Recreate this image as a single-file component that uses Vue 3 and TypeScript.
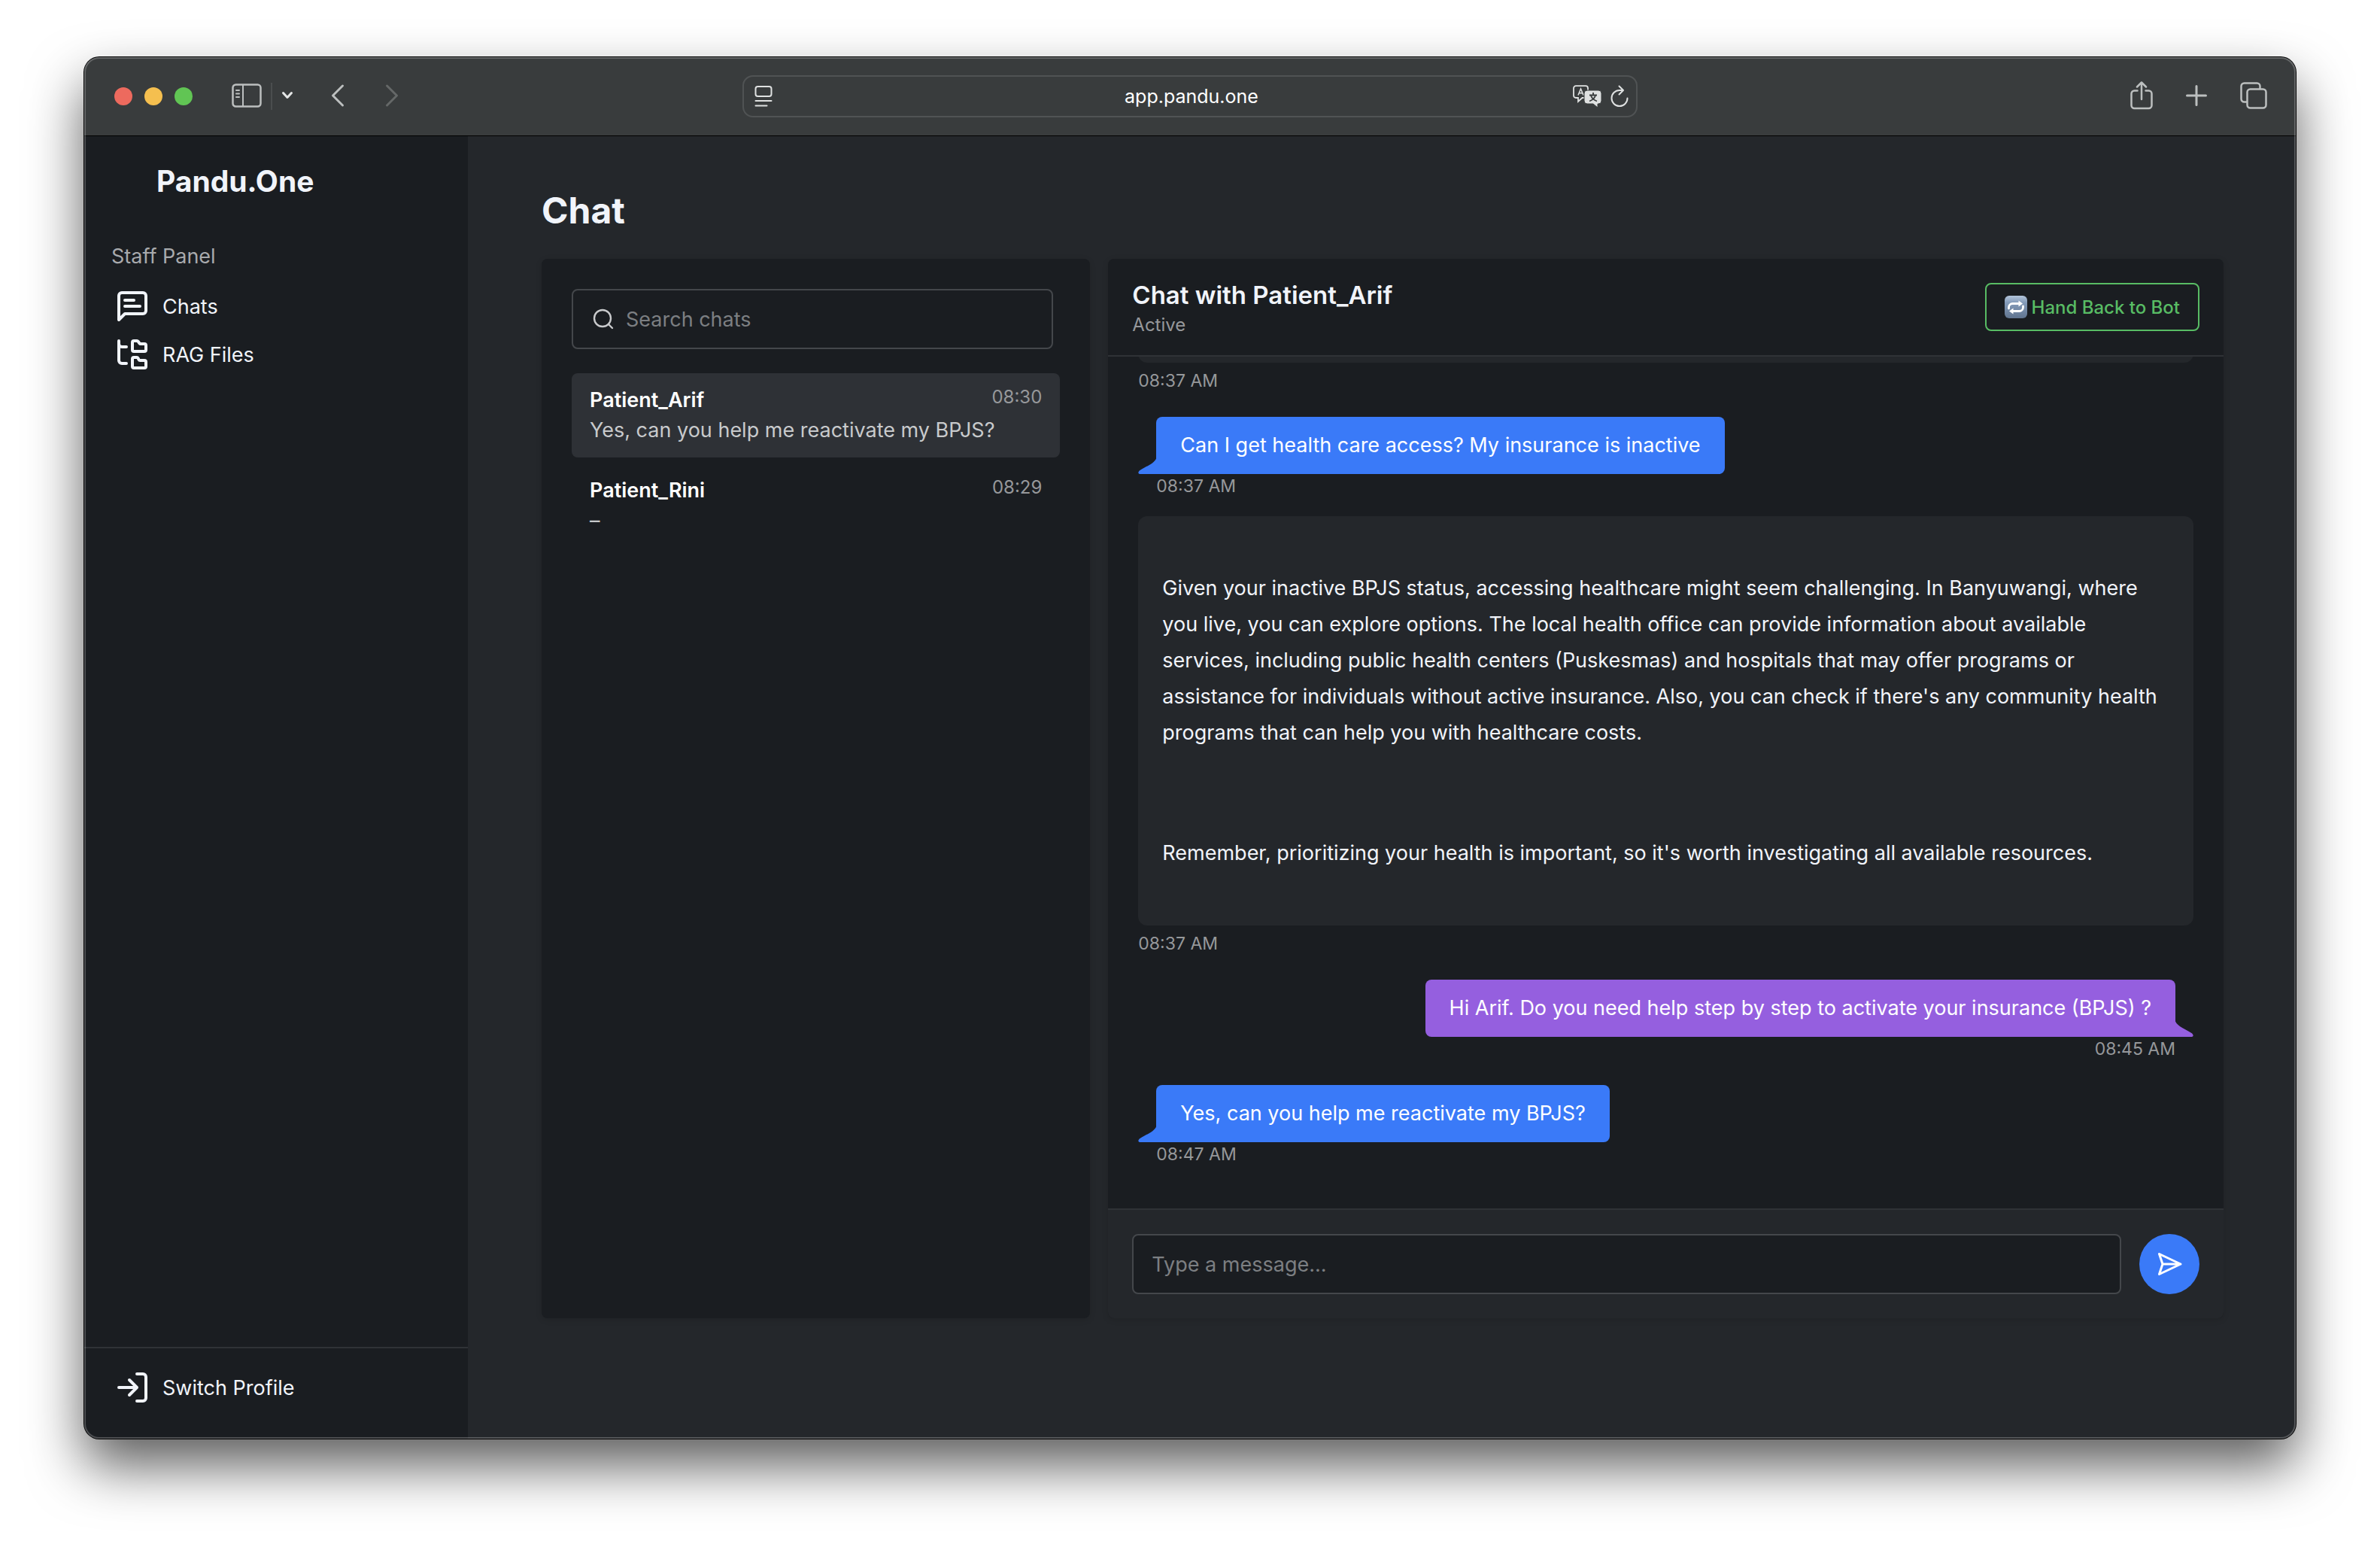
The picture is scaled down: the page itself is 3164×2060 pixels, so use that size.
<script setup lang="ts">
import { ref } from 'vue'

interface Conversation {
  name: string
  time: string
  preview: string
}

interface Message {
  from: 'bot' | 'patient' | 'staff'
  time: string
  paragraphs: string[]
}

const conversations: Conversation[] = [
  { name: 'Patient_Arif', time: '08:30', preview: 'Yes, can you help me reactivate my BPJS?' },
  { name: 'Patient_Rini', time: '08:29', preview: '–' },
]

const messages: Message[] = [
  { from: 'bot', time: '08:37 AM', paragraphs: [] },
  { from: 'patient', time: '08:37 AM', paragraphs: ['Can I get health care access? My insurance is inactive'] },
  {
    from: 'bot',
    time: '08:37 AM',
    paragraphs: [
      "Given your inactive BPJS status, accessing healthcare might seem challenging. In Banyuwangi, where you live, you can explore options. The local health office can provide information about available services, including public health centers (Puskesmas) and hospitals that may offer programs or assistance for individuals without active insurance. Also, you can check if there's any community health programs that can help you with healthcare costs.",
      "Remember, prioritizing your health is important, so it's worth investigating all available resources.",
    ],
  },
  { from: 'staff', time: '08:45 AM', paragraphs: ['Hi Arif. Do you need help step by step to activate your insurance (BPJS) ?'] },
  { from: 'patient', time: '08:47 AM', paragraphs: ['Yes, can you help me reactivate my BPJS?'] },
]

const activeName = ref('Patient_Arif')
const search = ref('')
const draft = ref('')
</script>

<template>
  <div class="desktop">
    <div class="window">
      <header class="toolbar">
        <div class="toolbar-left">
          <div class="lights">
            <span class="light red"></span>
            <span class="light yellow"></span>
            <span class="light green"></span>
          </div>
          <button class="icon-button" type="button" aria-label="Toggle sidebar">
            <svg width="40" height="32" viewBox="0 0 40 32" fill="none" stroke="#bcbfbf" stroke-width="2.5" stroke-linecap="round">
              <rect x="1.5" y="1.5" width="37" height="29" rx="4" />
              <path d="M15 2v28" stroke-width="2" />
              <path d="M6 9h4M6 13.500h4M6 18h4" stroke-width="2" />
            </svg>
          </button>
          <span class="toolbar-divider"></span>
          <button class="icon-button" type="button" aria-label="Tab groups">
            <svg width="16" height="12" viewBox="0 0 16 12" fill="none" stroke="#e4e6e6" stroke-width="3" stroke-linecap="round" stroke-linejoin="round">
              <path d="M2.500 2.500 8 8.500l5.500-6" />
            </svg>
          </button>
          <button class="icon-button back" type="button" aria-label="Back">
            <svg width="18" height="32" viewBox="0 0 18 32" fill="none" stroke="#bcbfbf" stroke-width="3" stroke-linecap="round" stroke-linejoin="round">
              <path d="M15.500 3 2.500 16l13 13" />
            </svg>
          </button>
          <button class="icon-button forward" type="button" aria-label="Forward">
            <svg width="18" height="32" viewBox="0 0 18 32" fill="none" stroke="#656868" stroke-width="3" stroke-linecap="round" stroke-linejoin="round">
              <path d="m2.500 3 13 13-13 13" />
            </svg>
          </button>
        </div>

        <div class="address">
          <svg width="24" height="30" viewBox="0 0 24 30" fill="none" stroke="#dfe1e1" stroke-width="2" stroke-linecap="round">
            <rect x="1.500" y="2" width="21" height="13" rx="3" />
            <path d="M1.500 21h21M1.500 27.500h15" />
          </svg>
          <span class="address-text">app.pandu.one</span>
          <div class="address-tools">
            <svg width="38" height="30" viewBox="0 0 38 30" fill="none">
              <path d="M4 1.200h13a3 3 0 0 1 3 3V14a3 3 0 0 1-3 3h-4.500L7 22v-5H4a3 3 0 0 1-3-3V4.200a3 3 0 0 1 3-3z" stroke="#dfe1e1" stroke-width="1.800" />
              <path d="M7 13.500 10.500 5 14 13.500M8.200 10.800h4.600" stroke="#dfe1e1" stroke-width="1.600" />
              <path d="M19 7h15a4 4 0 0 1 4 4v10a4 4 0 0 1-4 4h-1v5l-6-5h-8a4 4 0 0 1-4-4V11a4 4 0 0 1 4-4z" fill="#dfe1e1" stroke="#393c3d" stroke-width="1" />
              <path d="M27 10v3M22 13.500h10M30 14c-1 3-4 6-8 7.500M24 14c1 3 4 6 8 7.500" stroke="#393c3d" stroke-width="1.800" />
            </svg>
            <svg width="24" height="30" viewBox="0 0 24 30" fill="none" stroke="#dfe1e1" stroke-width="2" stroke-linecap="round" stroke-linejoin="round">
              <path d="M22.500 17.500A10.500 10.500 0 1 1 12 7h4" />
              <path d="m11.500 1.500 5.500 5.500-5.500 5.500" />
            </svg>
          </div>
        </div>

        <div class="toolbar-right">
          <button class="icon-button" type="button" aria-label="Share">
            <svg width="30" height="38" viewBox="0 0 30 38" fill="none" stroke="#bcbfbf" stroke-width="2.500" stroke-linecap="round" stroke-linejoin="round">
              <path d="M9.500 12.500H5.500a4 4 0 0 0-4 4v15.500a4 4 0 0 0 4 4h19a4 4 0 0 0 4-4V16.500a4 4 0 0 0-4-4h-4" />
              <path d="M15 24V2M9 7.500 15 1.500l6 6" />
            </svg>
          </button>
          <button class="icon-button" type="button" aria-label="New tab">
            <svg width="28" height="28" viewBox="0 0 28 28" fill="none" stroke="#bcbfbf" stroke-width="3" stroke-linecap="round">
              <path d="M14 1.500v25M1.500 14h25" />
            </svg>
          </button>
          <button class="icon-button" type="button" aria-label="Tab overview">
            <svg width="36" height="36" viewBox="0 0 36 36" fill="none" stroke="#bcbfbf" stroke-width="2.500">
              <rect x="9.500" y="9.500" width="25" height="25" rx="4" />
              <path d="M9.500 26.500H5.500a4 4 0 0 1-4-4v-17a4 4 0 0 1 4-4h17a4 4 0 0 1 4 4v4" />
            </svg>
          </button>
        </div>
      </header>

      <div class="app">
        <aside class="sidebar">
          <div class="brand">Pandu.One</div>
          <div class="group-label">Staff Panel</div>
          <nav class="nav">
            <a class="nav-link" href="#chats">
              <svg class="nav-icon" viewBox="0 0 24 24">
                <path d="M21 15a2 2 0 0 1-2 2H7l-4 4V5a2 2 0 0 1 2-2h14a2 2 0 0 1 2 2zM13 8H7M17 12H7" />
              </svg>
              Chats
            </a>
            <a class="nav-link" href="#rag-files">
              <svg class="nav-icon" viewBox="0 0 24 24">
                <path d="M20 10a1 1 0 0 0 1-1V6a1 1 0 0 0-1-1h-2.500a1 1 0 0 1-.8-.4l-.9-1.200A1 1 0 0 0 15 3h-2a1 1 0 0 0-1 1v5a1 1 0 0 0 1 1Z" />
                <path d="M20 21a1 1 0 0 0 1-1v-3a1 1 0 0 0-1-1h-2.900a1 1 0 0 1-.88-.55l-.42-.85a1 1 0 0 0-.92-.6H13a1 1 0 0 0-1 1v5a1 1 0 0 0 1 1Z" />
                <path d="M3 5a2 2 0 0 0 2 2h3M3 3v13a2 2 0 0 0 2 2h3" />
              </svg>
              RAG Files
            </a>
          </nav>
          <div class="sidebar-footer">
            <a class="nav-link" href="#switch-profile">
              <svg class="nav-icon" viewBox="0 0 24 24">
                <path d="M15 3h4a2 2 0 0 1 2 2v14a2 2 0 0 1-2 2h-4M10 17l5-5-5-5M15 12H3" />
              </svg>
              Switch Profile
            </a>
          </div>
        </aside>

        <main class="main">
          <h1 class="page-title">Chat</h1>
          <div class="columns">
            <section class="panel list-panel">
              <label class="search">
                <svg width="28" height="28" viewBox="0 0 28 28" fill="none" stroke="#c9cacc" stroke-width="2.400" stroke-linecap="round">
                  <circle cx="13" cy="13" r="11" />
                  <path d="m21 21 5 5" />
                </svg>
                <input v-model="search" type="text" placeholder="Search chats" aria-label="Search chats" />
              </label>
              <div class="conversations">
                <button
                  v-for="chat in conversations"
                  :key="chat.name"
                  type="button"
                  class="conversation"
                  :class="{ active: chat.name === activeName }"
                  @click="activeName = chat.name"
                >
                  <span class="conversation-head">
                    <span class="conversation-name">{{ chat.name }}</span>
                    <span class="conversation-time">{{ chat.time }}</span>
                  </span>
                  <span class="conversation-preview">{{ chat.preview }}</span>
                </button>
              </div>
            </section>

            <section class="panel chat-panel">
              <header class="chat-header">
                <div>
                  <h2 class="chat-title">Chat with Patient_Arif</h2>
                  <p class="chat-status">Active</p>
                </div>
                <button class="handback" type="button">
                  <svg width="30" height="30" viewBox="0 0 30 30" fill="none">
                    <defs>
                      <linearGradient id="repeat-tile" x1="0" y1="0" x2="0" y2="1">
                        <stop offset="0" stop-color="#b4c6dc" />
                        <stop offset="0.300" stop-color="#859cba" />
                        <stop offset="1" stop-color="#60748f" />
                      </linearGradient>
                    </defs>
                    <rect width="30" height="30" rx="6" fill="url(#repeat-tile)" />
                    <path d="M5.500 17v-1.500a5 5 0 0 1 5-5H19M24.500 14v1.500a5 5 0 0 1-5 5H11" stroke="#fff" stroke-width="2.800" stroke-linecap="round" />
                    <path d="m18.500 6.500 5.500 4-5.500 4zM11.500 16.500l-5.500 4 5.500 4z" fill="#fff" />
                  </svg>
                  Hand Back to Bot
                </button>
              </header>

              <div class="thread">
                <article v-for="(message, index) in messages" :key="index" class="message" :class="message.from">
                  <div class="bubble">
                    <p v-for="text in message.paragraphs" :key="text">{{ text }}</p>
                    <svg v-if="message.from !== 'bot'" class="tail" viewBox="0 0 25 24">
                      <path d="M25 0C24 9 14 12 2.500 19-.8 21.500 0 24 3 24h22z" />
                    </svg>
                  </div>
                  <time class="stamp">{{ message.time }}</time>
                </article>
              </div>

              <form class="composer" @submit.prevent="draft = ''">
                <input v-model="draft" type="text" placeholder="Type a message..." aria-label="Message" />
                <button class="send" type="submit" aria-label="Send">
                  <svg width="36" height="36" viewBox="0 0 24 24" fill="none" stroke="#fff" stroke-width="2" stroke-linecap="round" stroke-linejoin="round">
                    <path d="m3 3 3 9-3 9 19-9ZM6 12h16" />
                  </svg>
                </button>
              </form>
            </section>
          </div>
        </main>
      </div>
    </div>
  </div>
</template>

<style>
body {
  margin: 0;
  background: #fff;
}
</style>

<style scoped>
.desktop {
  --body: 27px;
  --small: 24px;
  --stamp: 23px;
  --line: #2f3236;
  --field-line: #44474b;
  --dark: #1a1d21;
  --surface: #24272b;
  --bright: #f1f4fa;
  box-sizing: border-box;
  min-height: 100vh;
  padding: 76px 112px 148px;
  display: flex;
  overflow: hidden;
  font-family: Inter, 'Liberation Sans', sans-serif;
  font-size: var(--body);
  color: var(--bright);
}

.desktop *,
.desktop *::after {
  box-sizing: border-box;
}

button,
input {
  font: inherit;
  color: inherit;
}

button {
  border: 0;
  padding: 0;
  background: none;
}

h1,
h2,
p {
  margin: 0;
}

svg {
  display: block;
  flex: none;
}

.window {
  position: relative;
  flex: 1;
  min-width: 0;
  display: flex;
  flex-direction: column;
  border-radius: 20px;
  background: var(--surface);
  box-shadow: 0 0 0 1px #000, 0 36px 72px rgba(0, 0, 0, 0.64);
}

.window::after {
  content: '';
  position: absolute;
  inset: 0;
  border-radius: 20px;
  box-shadow: inset 0 0 0 2px rgba(255, 255, 255, 0.22);
  pointer-events: none;
}

.toolbar {
  height: 105px;
  display: grid;
  grid-template-columns: 1fr minmax(400px, 1190px) 1fr;
  align-items: center;
  background: #393c3d;
  border-bottom: 1px solid #000;
  border-radius: 20px 20px 0 0;
}

.toolbar-left {
  display: flex;
  align-items: center;
  padding-left: 40px;
}

.icon-button {
  padding-bottom: 2px;
}

.lights {
  display: flex;
  gap: 16px;
  margin-right: 52px;
}

.light {
  width: 24px;
  height: 24px;
  border-radius: 50%;
}

.red {
  background: #ed6a5e;
}

.yellow {
  background: #f5bf4f;
}

.green {
  background: #61c554;
}

.toolbar-divider {
  width: 2px;
  height: 36px;
  margin: 0 12px;
  background: #4b4e4f;
}

.back {
  margin-left: 50px;
}

.forward {
  margin-left: 54px;
}

.address {
  height: 56px;
  display: grid;
  grid-template-columns: 1fr auto 1fr;
  align-items: center;
  padding: 0 10px 0 14px;
  border: 2px solid #505354;
  border-radius: 14px;
}

.address-text {
  font-size: 25px;
  color: #fff;
}

.address-tools {
  display: flex;
  justify-content: flex-end;
  gap: 12px;
}

.toolbar-right {
  display: flex;
  justify-content: flex-end;
  align-items: center;
  gap: 44px;
  padding-right: 38px;
}

.app {
  flex: 1;
  display: flex;
}

.sidebar {
  width: 510px;
  display: flex;
  flex-direction: column;
  background: var(--dark);
  border-radius: 0 0 0 20px;
}

.brand {
  padding: 36px 96px 0;
  font-size: 39px;
  line-height: 48px;
  font-weight: 700;
}

.group-label {
  margin-top: 54px;
  padding: 0 36px;
  line-height: 44px;
  color: #a8aaad;
}

.nav {
  flex: 1;
  margin-top: 12px;
}

.nav-link {
  height: 64px;
  padding-left: 40px;
  display: flex;
  align-items: center;
  gap: 16px;
  color: inherit;
  text-decoration: none;
}

.nav-icon {
  width: 48px;
  height: 48px;
  fill: none;
  stroke: currentColor;
  stroke-width: 2;
  stroke-linecap: round;
  stroke-linejoin: round;
}

.sidebar-footer {
  padding: 20px 0 36px;
  border-top: 2px solid var(--line);
}

.main {
  flex: 1;
  min-width: 0;
  display: flex;
  flex-direction: column;
  padding: 64px 96px 160px 98px;
}

.page-title {
  font-size: 48px;
  line-height: 70px;
  font-weight: 700;
}

.columns {
  flex: 1;
  margin-top: 29px;
  display: grid;
  grid-template-columns: repeat(3, minmax(0, 1fr));
  gap: 24px;
}

.panel {
  background: var(--dark);
  border-radius: 8px;
  box-shadow: 0 2px 8px rgba(0, 0, 0, 0.12);
  overflow: hidden;
}

.list-panel {
  padding: 40px;
}

.search {
  height: 80px;
  margin-right: 9px;
  padding: 0 26px;
  display: flex;
  align-items: center;
  gap: 16px;
  border: 2px solid var(--field-line);
  border-radius: 8px;
}

input {
  min-width: 0;
  flex: 1;
  border: 0;
  outline: 0;
  padding: 0;
  background: none;
}

input::placeholder {
  color: #7c7f82;
  opacity: 1;
}

.conversations {
  margin-top: 32px;
  display: flex;
  flex-direction: column;
  gap: 8px;
}

.conversation {
  padding: 16px 24px;
  border-radius: 8px;
  text-align: left;
}

.conversation.active {
  background: #2e3136;
}

.conversation-head {
  display: flex;
  justify-content: space-between;
}

.conversation-name {
  line-height: 40px;
  font-weight: 600;
  color: #fff;
}

.conversation-time {
  font-size: var(--small);
  line-height: 32px;
  color: #96989b;
}

.conversation-preview {
  display: block;
  line-height: 40px;
  color: #c8cacc;
}

.chat-panel {
  grid-column: span 2;
  display: flex;
  flex-direction: column;
}

.chat-header {
  padding: 24px 32px;
  display: flex;
  align-items: center;
  justify-content: space-between;
  border-bottom: 2px solid var(--line);
}

.chat-title {
  font-size: 33px;
  line-height: 48px;
  font-weight: 600;
}

.chat-status {
  font-size: var(--small);
  line-height: 32px;
  color: #96989b;
}

.handback {
  height: 64px;
  padding: 0 24px;
  display: flex;
  align-items: center;
  gap: 6px;
  border: 2px solid #58bc64;
  border-radius: 8px;
  font-size: var(--small);
  font-weight: 500;
  color: #58bc64;
}

.thread {
  flex: 1 1 0;
  min-height: 0;
  overflow: hidden;
  display: flex;
  flex-direction: column;
  justify-content: flex-end;
  gap: 32px;
  padding: 0 40px 56px;
}

.message {
  flex: none;
  display: flex;
  flex-direction: column;
  align-items: flex-start;
}

.patient {
  padding-left: 24px;
}

.staff {
  padding-right: 24px;
  align-items: flex-end;
}

.bot {
  margin-top: -8px;
}

.bubble {
  position: relative;
  padding: 14px 32px;
  border-radius: 8px;
  line-height: 48px;
  color: #fff;
}

.patient .bubble {
  background: #3a7af8;
  border-bottom-left-radius: 0;
}

.staff .bubble {
  background: #955fdf;
  border-bottom-right-radius: 0;
}

.bot .bubble {
  width: 100%;
  display: grid;
  gap: 112px;
  padding: 72px 32px;
  border-radius: 12px;
  background: var(--surface);
  color: var(--bright);
}

.tail {
  position: absolute;
  bottom: 0;
  width: 25px;
  height: 24px;
}

.patient .tail {
  left: -24px;
  fill: #3a7af8;
}

.staff .tail {
  right: -24px;
  fill: #955fdf;
  transform: scaleX(-1);
}

.stamp {
  font-size: var(--stamp);
  line-height: 32px;
  color: #96989b;
}

.bot .stamp {
  margin-top: 8px;
}

.composer {
  padding: 32px;
  display: flex;
  gap: 24px;
  background: var(--surface);
  border-top: 2px solid var(--line);
}

.composer input {
  height: 80px;
  padding: 0 24px;
  background: var(--dark);
  border: 2px solid var(--field-line);
  border-radius: 8px;
}

.send {
  width: 80px;
  height: 80px;
  display: grid;
  place-items: center;
  border-radius: 50%;
  background: #3a7af8;
}
</style>
